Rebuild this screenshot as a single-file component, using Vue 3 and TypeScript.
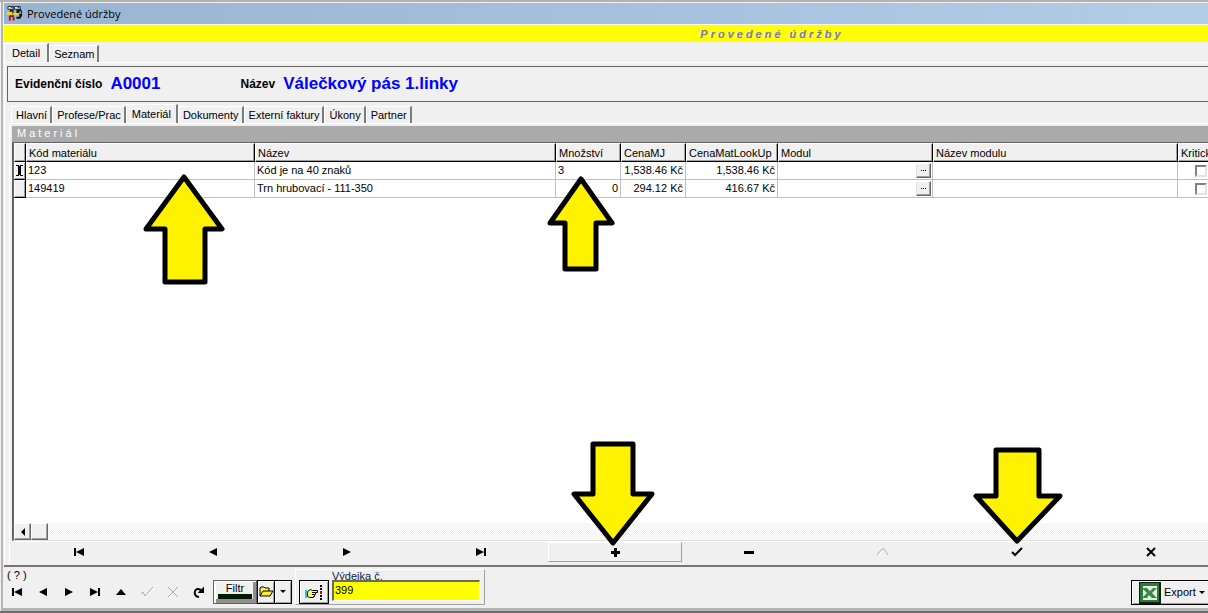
<script setup lang="ts">
import { ref } from 'vue'

interface Tab { id: string; label: string }
interface NavAction { id: string; label: string; path: string; stroke?: boolean; disabled?: boolean }
interface MaterialRow {
  code: string
  name: string
  amount: string
  amountEdited?: boolean
  unitPrice: string
  lookupPrice: string
  critical: boolean
}

const outerTabs: Tab[] = [
  { id: 'detail', label: 'Detail' },
  { id: 'seznam', label: 'Seznam' },
]
const innerTabs: Tab[] = [
  { id: 'hlavni', label: 'Hlavní' },
  { id: 'profese', label: 'Profese/Prac' },
  { id: 'material', label: 'Materiál' },
  { id: 'dokumenty', label: 'Dokumenty' },
  { id: 'faktury', label: 'Externí faktury' },
  { id: 'ukony', label: 'Úkony' },
  { id: 'partner', label: 'Partner' },
]
const activeOuter = ref('detail')
const activeInner = ref('material')
const issueNumber = ref('399')

const FIRST = 'M1 2H3V10H1zM3 6L11 2V10z'
const PREV = 'M2 6L10 2V10z'
const NEXT = 'M2 2L10 6L2 10z'
const LAST = 'M1 2L9 6L1 10zM9 2H11V10H9z'
const CHECK = 'M1 6L4 9L11 2'

const gridNav: NavAction[] = [
  { id: 'first', label: 'První', path: FIRST },
  { id: 'prev', label: 'Předchozí', path: PREV },
  { id: 'next', label: 'Další', path: NEXT },
  { id: 'last', label: 'Poslední', path: LAST },
  { id: 'insert', label: 'Přidat', path: 'M5 2H8V5H11V8H8V11H5V8H2V5H5z' },
  { id: 'delete', label: 'Smazat', path: 'M1 5H11V8H1z' },
  { id: 'edit', label: 'Upravit', path: 'M0 9L5 3H7L11 9', stroke: true, disabled: true },
  { id: 'post', label: 'Uložit', path: CHECK, stroke: true },
  { id: 'cancel', label: 'Zrušit', path: 'M2 2L10 10M10 2L2 10', stroke: true },
]
const formNav: NavAction[] = [
  { id: 'first', label: 'První', path: FIRST },
  { id: 'prev', label: 'Předchozí', path: PREV },
  { id: 'next', label: 'Další', path: NEXT },
  { id: 'last', label: 'Poslední', path: LAST },
  { id: 'edit', label: 'Upravit', path: 'M6 3L11 9H1z' },
  { id: 'post', label: 'Uložit', path: 'M0 8L2 6L4 10L12 1', stroke: true, disabled: true },
  { id: 'cancel', label: 'Zrušit', path: 'M1 1L11 11M11 1L1 11', stroke: true, disabled: true },
  { id: 'refresh', label: 'Obnovit', path: 'M6 11C0 10 1 3 5 3C7 3 8 4 9 5M10 3V6H7z', stroke: true },
]

const rows: MaterialRow[] = [
  { code: '123', name: 'Kód je na 40 znaků', amount: '3', amountEdited: true, unitPrice: '1,538.46 Kč', lookupPrice: '1,538.46 Kč', critical: false },
  { code: '149419', name: 'Trn hrubovací - 111-350', amount: '0', unitPrice: '294.12 Kč', lookupPrice: '416.67 Kč', critical: false },
]
</script>

<template>
  <main class="window">
    <header class="titlebar">
      <svg class="app-icon" viewBox="0 0 17 17" aria-hidden="true">
        <path d="M3 4H7V12H3zM10 3H14L16 6V11L14 14H10V12H13V8H10z" fill="#161616" />
        <path d="M1 1H7V4H1zM8 1H14V4H8z" fill="#fff" stroke="#222" stroke-width="1" />
        <path d="M4 1H6V3H4zM11 1H13V3H11z" fill="#2238c8" />
        <path d="M4 6H6V11H4zM13 6H15V9H13z" fill="#999" />
        <path d="M0 7H5V10H0zM6 8H12V10H6z" fill="#f2dc00" />
        <path d="M2 11H4V16H2zM6 12H8V16H6z" fill="#d00000" />
      </svg>
      <span>Provedené údržby</span>
    </header>
    <h1 class="banner">Provedené údržby</h1>

    <nav class="tabs outer" aria-label="Zobrazení">
      <button v-for="tab in outerTabs" :key="tab.id" type="button" class="tab"
        :class="{ active: tab.id === activeOuter }" @click="activeOuter = tab.id">{{ tab.label }}</button>
    </nav>

    <section class="page">
      <dl class="record">
        <div><dt>Evidenční číslo</dt><dd>A0001</dd></div>
        <div><dt>Název</dt><dd>Válečkový pás 1.linky</dd></div>
      </dl>

      <nav class="tabs inner" aria-label="Části záznamu">
        <button v-for="tab in innerTabs" :key="tab.id" type="button" class="tab"
          :class="{ active: tab.id === activeInner }" @click="activeInner = tab.id">{{ tab.label }}</button>
      </nav>

      <div class="subpage">
        <h2 class="caption">Materiál</h2>
        <div class="grid-frame">
          <div class="grid-scroll">
            <table class="grid">
              <colgroup>
                <col class="c-mark"><col class="c-code"><col class="c-name"><col class="c-amount"><col class="c-price">
                <col class="c-lookup"><col class="c-module"><col class="c-modname"><col class="c-critical">
              </colgroup>
              <thead>
                <tr>
                  <th aria-label="Řádek"></th>
                  <th>Kód materiálu</th>
                  <th>Název</th>
                  <th>Množství</th>
                  <th>CenaMJ</th>
                  <th>CenaMatLookUp</th>
                  <th>Modul</th>
                  <th>Název modulu</th>
                  <th>Kritick</th>
                </tr>
              </thead>
              <tbody>
                <tr v-for="(row, i) in rows" :key="row.code">
                  <td class="mark">
                    <svg v-if="i === 0" viewBox="0 0 7 11" aria-hidden="true"><path d="M0 0H3V1H4V0H7V1H5V10H7V11H4V10H3V11H0V10H2V1H0z" /></svg>
                  </td>
                  <td>{{ row.code }}</td>
                  <td>{{ row.name }}</td>
                  <td :class="{ num: !row.amountEdited }">{{ row.amount }}</td>
                  <td class="num">{{ row.unitPrice }}</td>
                  <td class="num">{{ row.lookupPrice }}</td>
                  <td class="lookup"><button type="button" aria-label="Vybrat modul"><i></i><i></i><i></i></button></td>
                  <td></td>
                  <td class="critical"><input v-model="row.critical" type="checkbox" aria-label="Kritický"></td>
                </tr>
              </tbody>
            </table>
          </div>
          <div class="hscroll">
            <button type="button" aria-label="Posunout vlevo"><svg viewBox="0 0 12 12" aria-hidden="true"><path d="M4 6L8 2V10z" /></svg></button>
            <span class="thumb"></span>
          </div>
        </div>

        <div class="grid-nav">
          <button v-for="a in gridNav" :key="a.id" type="button" :aria-label="a.label" :disabled="a.disabled"
            :class="{ raised: a.id === 'insert' }">
            <svg class="glyph" :class="{ line: a.stroke, thin: a.disabled }" viewBox="0 0 12 12" aria-hidden="true"><path :d="a.path" /></svg>
          </button>
        </div>
      </div>
    </section>

    <footer class="toolbar">
      <div class="status">
        <span class="help">( ? )</span>
        <div class="form-nav">
          <button v-for="a in formNav" :key="a.id" type="button" :aria-label="a.label" :disabled="a.disabled">
            <svg class="glyph" :class="{ line: a.stroke, thin: a.disabled }" viewBox="0 0 12 12" aria-hidden="true"><path :d="a.path" /></svg>
          </button>
        </div>
      </div>

      <div class="filter-group">
        <button type="button" class="filter"><span>Filtr</span></button>
        <button type="button" class="boxed folder" aria-label="Otevřít">
          <svg viewBox="0 0 15 12" aria-hidden="true">
            <path d="M1 10V2L2 1H5L6 2H10V5" fill="#ffef66" stroke="#000" />
            <path d="M1 10L4 5H14L11 10z" fill="#ffe92e" stroke="#000" />
          </svg>
        </button>
        <button type="button" class="boxed drop" aria-label="Další volby">
          <svg viewBox="0 0 6 4" aria-hidden="true"><path d="M0 0H6L3 3z" /></svg>
        </button>
      </div>

      <div class="issue">
        <button type="button" class="boxed hand" aria-label="Vybrat výdejku">
          <svg viewBox="0 0 18 15" aria-hidden="true">
            <path d="M0 5H2V13H0z" fill="#00d8e8" />
            <path d="M2.500 6.500L5.500 4.500L7.500 5.500H12.500V7.500H10.500V9.500H9.500V11.500H8.500V12.500H4.500L2.500 11.500z" fill="#fff06a" stroke="#000" />
            <path d="M7 7.500H10M7 9.500H9" stroke="#000" />
            <path d="M15 0H17V2H15zM15 3H17V5H15zM15 10H17V12H15zM15 13H17V15H15z" fill="#000" />
            <path d="M15 6H17V9H15z" fill="#e00000" />
          </svg>
        </button>
        <div class="field">
          <label for="issue-number">Výdejka č.</label>
          <input id="issue-number" v-model="issueNumber" type="text">
        </div>
      </div>

      <button type="button" class="boxed export">
        <svg class="excel" viewBox="0 0 22 22" aria-hidden="true">
          <path d="M0 0H22V22H0z" fill="#0b250e" />
          <path d="M1 1H20V20H1z" fill="#2f7a3b" />
          <path d="M4 4H18V18H4z" fill="#e4efe2" />
          <path d="M3 6H8L11 9L14 6H18L13 11L18 16H13L10 13L8 16H3L8 11z" fill="#3d8746" />
        </svg>
        <span>Export</span>
        <svg class="caret" viewBox="0 0 6 4" aria-hidden="true"><path d="M0 0H6L3 3z" /></svg>
      </button>
    </footer>

    <svg class="pointer code-pointer" viewBox="0 0 82 112" aria-hidden="true"><path d="M41 4L79 56H62V109H22V56H3z" /></svg>
    <svg class="pointer amount-pointer" viewBox="0 0 68 98" aria-hidden="true"><path d="M34 4L65 48H49V94H18V48H3z" /></svg>
    <svg class="pointer insert-pointer" viewBox="0 0 84 106" aria-hidden="true"><path d="M22 3H62V53H81L42 102L3 53H22z" /></svg>
    <svg class="pointer post-pointer" viewBox="0 0 90 98" aria-hidden="true"><path d="M23 3H66V49H87L44 94L3 49H23z" /></svg>
  </main>
</template>

<style>
body { margin: 0; overflow: hidden; background: #f0f0f0; }
</style>

<style scoped>
* { box-sizing: border-box; }
.window {
  position: relative;
  display: flex;
  flex-direction: column;
  min-height: 100vh;
  overflow: hidden;
  padding: 3px 0 0 4px;
  background: #f0f0f0;
  border-bottom: 2px solid #6d6d6d;
  box-shadow: inset 0 2px #b2b2b2, inset 1px 0 #f0f0f0, inset 3px 0 #b4b4b4, inset 0 -3px #b4b4b4;
  font: 11px/13px "Liberation Sans", Arial, sans-serif;
  color: #000;
}
button, input { font: inherit; color: inherit; }
button { margin: 0; padding: 0; border: 0; background: none; border-radius: 0; }
svg { display: block; }

.titlebar {
  display: flex;
  align-items: center;
  gap: 4px;
  height: 21px;
  padding-left: 3px;
  background: linear-gradient(90deg, #99b4d1, #b2cde8);
  font: 11px/20px "Open Sans", "Noto Sans", sans-serif;
}
.app-icon { width: 16px; height: 17px; }
.banner {
  margin: 0;
  height: 18px;
  padding-left: 332px;
  border-top: 1px solid #f6f6ee;
  background: #ff0;
  color: #808080;
  text-align: center;
  font: italic bold 11px/19px "Liberation Sans", Arial, sans-serif;
  letter-spacing: 3px;
  text-shadow: -1px -1px #e8e8e0;
}

.tabs { display: flex; align-items: flex-end; height: 19px; }
.tabs.outer { height: 20px; }
.tab {
  height: 17px;
  padding: 0 3px 0 4px;
  border-top: 1px solid #fff;
  border-left: 1px solid #fff;
  border-right: 2px solid #7c7c7c;
  line-height: 16px;
  white-space: nowrap;
}
.tab.active { height: 19px; padding: 0 5px; line-height: 15px; background: #f0f0f0; }
.outer .tab.active { padding: 0 7px; }
.tabs.inner { margin-top: 2px; padding-left: 6px; }

.page { display: flex; flex: 1; flex-direction: column; border-top: 1px solid #fff; border-left: 1px solid #fff; }
.record {
  display: flex;
  align-items: center;
  gap: 80px;
  height: 36px;
  margin: 3px 0 0 2px;
  padding-left: 7px;
  border: 1px solid #646464;
  border-right: 0;
  font-weight: bold;
  white-space: nowrap;
}
.record div { display: flex; align-items: center; gap: 8px; }
.record dt { font-size: 12px; }
.record dd { margin: 0; color: #00f; font-size: 17px; line-height: 20px; }

.subpage {
  display: flex;
  flex: 1;
  flex-direction: column;
  margin-left: 4px;
  padding: 2px 0 3px 2px;
  border-top: 1px solid #fff;
  border-left: 1px solid #fff;
}
.caption {
  margin: 0;
  height: 16px;
  padding-left: 5px;
  background: #aaa;
  color: #fff;
  font: 11px/15px "Liberation Sans", Arial, sans-serif;
  letter-spacing: 3px;
}
.grid-frame {
  display: flex;
  flex: 1;
  flex-direction: column;
  border-top: 1px solid #646464;
  border-left: 2px solid #646464;
  border-bottom: 1px solid #e0e0e0;
  background: #fff;
  overflow: hidden;
}
.grid-scroll { flex: 1; overflow: hidden; }
.grid { width: 1224px; table-layout: fixed; border-collapse: separate; border-spacing: 0; font-size: 11px; }
.c-mark { width: 12px; }
.c-code { width: 229px; }
.c-name { width: 301px; }
.c-amount { width: 65px; }
.c-price { width: 65px; }
.c-lookup { width: 92px; }
.c-module { width: 155px; }
.c-modname { width: 245px; }
.c-critical { width: 60px; }
.grid th {
  height: 19px;
  padding: 2px 0 0 2px;
  border-top: 1px solid #fff;
  border-left: 1px solid #fff;
  border-right: 1px solid #000;
  border-bottom: 1px solid #000;
  background: #f0f0f0;
  box-shadow: inset -1px -1px #a0a0a0;
  font-weight: normal;
  text-align: left;
  white-space: nowrap;
}
.grid td {
  height: 18px;
  padding: 0 2px;
  border-right: 1px solid #c0c0c0;
  border-bottom: 1px solid #c0c0c0;
  white-space: nowrap;
}
.grid .num { text-align: right; }
.grid .mark {
  padding: 0 2px;
  border-right-color: #000;
  border-bottom-color: #000;
  background: #f0f0f0;
  box-shadow: inset 1px 1px #fff, inset -1px -1px #a0a0a0;
}
.mark svg { width: 7px; height: 11px; }
.grid .lookup { padding: 0 1px; }
.lookup button {
  display: flex;
  align-items: center;
  justify-content: center;
  gap: 1px;
  width: 15px;
  height: 15px;
  margin-left: auto;
  border: 1px solid;
  border-color: #fff #696969 #696969 #e3e3e3;
  background: #f0f0f0;
  box-shadow: inset -1px -1px #a0a0a0;
}
.lookup i { width: 1px; height: 1px; background: #000; }
.critical input {
  display: block;
  appearance: none;
  width: 12px;
  height: 12px;
  margin: 0 0 0 15px;
  border: 2px solid;
  border-color: #808080 #e3e3e3 #e3e3e3 #808080;
  background: #fff;
}
.hscroll { display: flex; height: 17px; background: repeating-conic-gradient(#fff 0 25%, #f0f0f0 0 50%) 0 0 / 2px 2px; }
.hscroll button, .thumb {
  display: grid;
  place-items: center;
  width: 17px;
  height: 17px;
  border: 1px solid;
  border-color: #fff #696969 #696969 #fff;
  background: #f0f0f0;
  box-shadow: inset -1px -1px #a0a0a0;
}
.hscroll svg { width: 12px; height: 12px; }

.grid-nav {
  display: grid;
  grid-template-columns: repeat(9, minmax(134px, 1fr));
  height: 21px;
  overflow: hidden;
  border-top: 1px solid #fff;
}
.grid-nav button { display: grid; place-items: center; height: 20px; border: 1px solid transparent; }
.grid-nav .raised { border-color: #fff #a0a0a0 #a0a0a0 #fff; }
.glyph { width: 12px; height: 12px; fill: #000; }
.glyph.line { fill: none; stroke: #000; stroke-width: 2; }
.glyph.thin { stroke: #a8a8a8; stroke-width: 1; filter: drop-shadow(1px 1px 0 #fff); }

.toolbar {
  display: flex;
  align-items: flex-start;
  height: 46px;
  border-top: 2px solid #757575;
}
.status { width: 209px; flex: none; }
.help { display: block; height: 15px; padding: 2px 0 0 3px; }
.form-nav { display: grid; grid-template-columns: repeat(8, 26px); }
.form-nav button { display: grid; place-items: center; height: 20px; }
.filter-group { display: flex; flex: none; padding-top: 13px; }
.filter {
  display: flex;
  align-items: center;
  justify-content: center;
  width: 44px;
  height: 24px;
  padding-bottom: 3px;
  border: 1px solid #606060;
  background: #f0f0f0;
  box-shadow: inset 2px 1px #fff, inset -3px -4px #909090;
}
.filter span { display: block; width: 34px; height: 16px; border-bottom: 5px solid #001b00; line-height: 11px; }
.boxed {
  display: grid;
  place-items: center;
  height: 24px;
  border: 1px solid #000;
  background: #f0f0f0;
  box-shadow: inset 1px 1px #fff, inset -1px -1px #a0a0a0;
}
.folder { width: 18px; }
.folder svg { width: 15px; height: 12px; }
.drop { width: 18px; margin-left: -1px; }
.drop svg, .caret { width: 6px; height: 4px; }
.issue {
  display: flex;
  flex: none;
  gap: 3px;
  width: 190px;
  height: 36px;
  margin: 2px 0 0 3px;
  padding: 0 0 0 3px;
  border: 1px solid;
  border-color: #fff #a0a0a0 #a0a0a0 #fff;
}
.hand { width: 30px; margin-top: 10px; }
.hand svg { width: 18px; height: 15px; }
.field { width: 148px; }
.field label { display: block; height: 10px; overflow: hidden; color: #111840; line-height: 13px; }
.field input {
  display: block;
  width: 100%;
  height: 21px;
  padding: 0 2px 2px 1px;
  border: 1px solid;
  border-color: #696969 #fff #fff #696969;
  border-top-width: 2px;
  border-left-width: 2px;
  border-radius: 0;
  background: #ff0;
  outline: 0;
}
.export {
  display: flex;
  align-items: center;
  gap: 3px;
  width: 82px;
  height: 25px;
  flex: none;
  margin: 13px -5px 0 auto;
  padding-left: 7px;
}
.excel { width: 22px; height: 22px; }

/* Guide arrows floating above the form */
.pointer { position: absolute; pointer-events: none; fill: #fff200; stroke: #000; stroke-width: 5; stroke-linejoin: round; }
.code-pointer { left: 143px; top: 173px; width: 82px; height: 112px; }
.amount-pointer { left: 547px; top: 175px; width: 68px; height: 98px; }
.insert-pointer { left: 571px; top: 441px; width: 84px; height: 106px; }
.post-pointer { left: 973px; top: 447px; width: 90px; height: 98px; }
</style>
